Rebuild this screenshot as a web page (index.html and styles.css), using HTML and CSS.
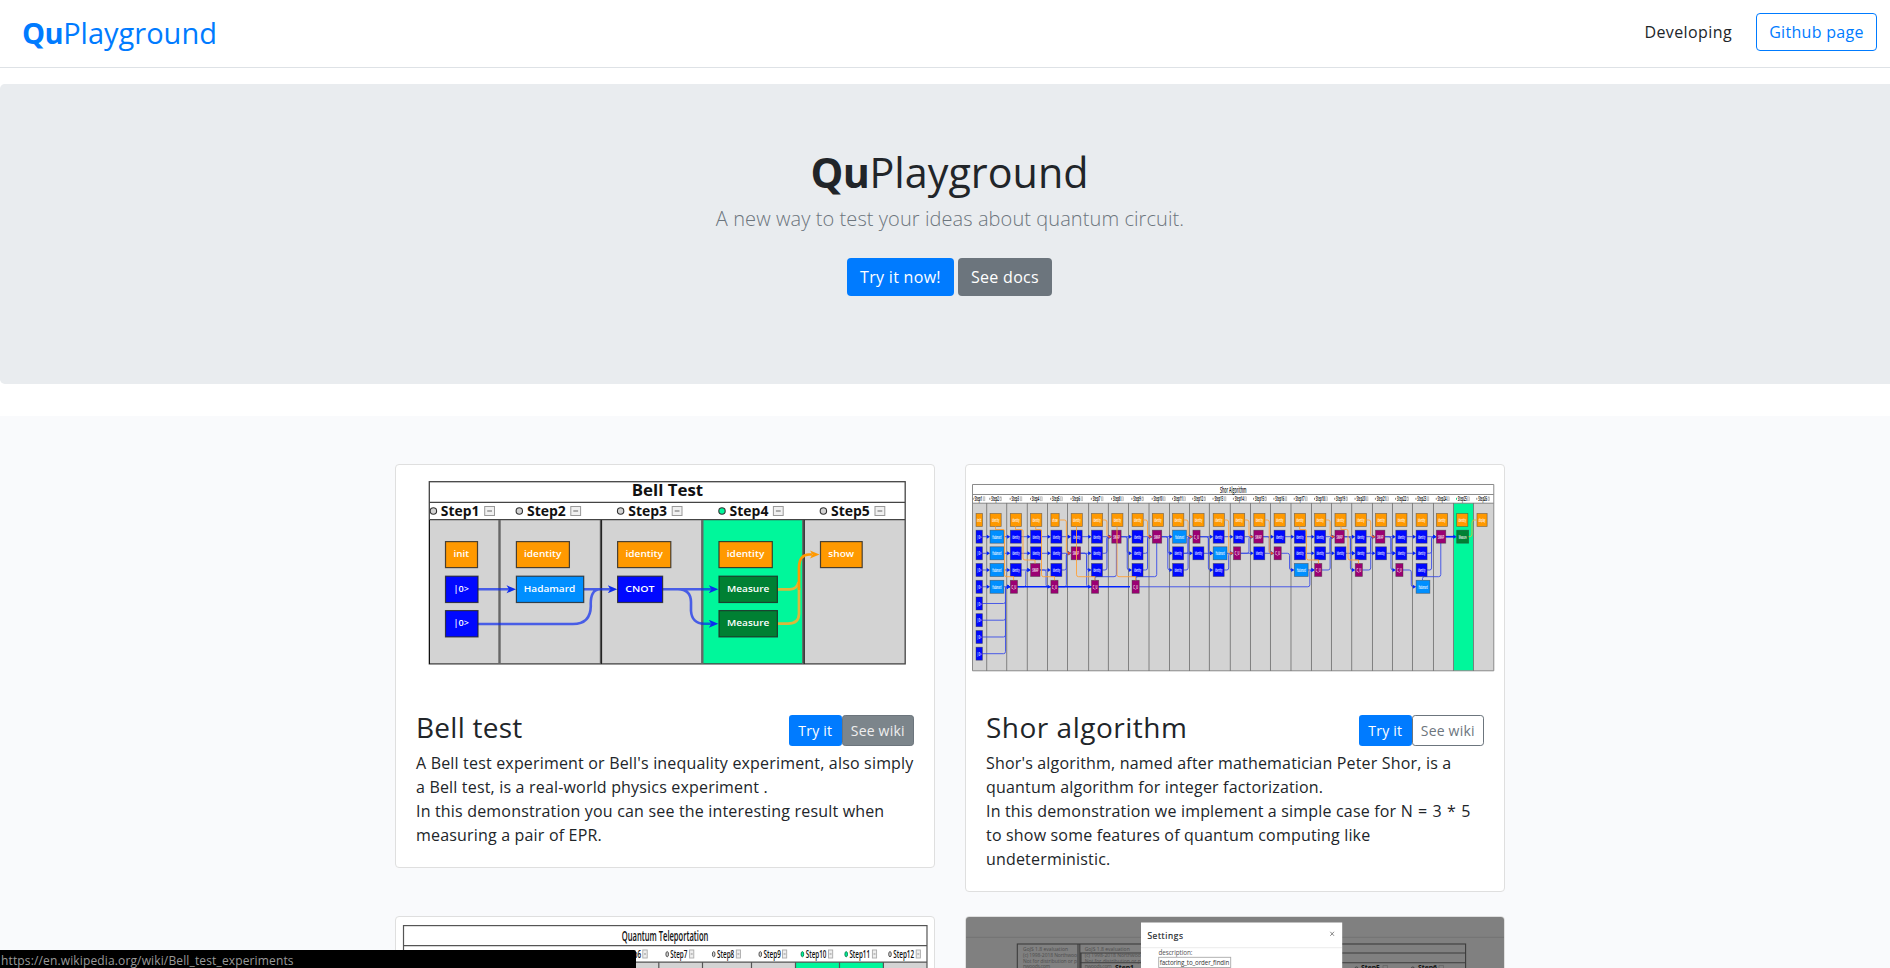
FILE: index.html
```
<!DOCTYPE html>
<html lang="en">
<head>
<meta charset="utf-8">
<title>QuPlayground</title>
<link rel="stylesheet" href="styles.css">
</head>
<body>
<header class="topbar">
  <a class="brand"><b>Qu</b>Playground</a>
  <nav class="nav">
    <a class="nav-link">Developing</a>
    <a class="btn btn-outline-primary btn-github">Github page</a>
  </nav>
</header>

<section class="hero">
  <h1 class="hero-title"><b>Qu</b>Playground</h1>
  <p class="hero-lead">A new way to test your ideas about quantum circuit.</p>
  <div class="hero-actions">
    <a class="btn btn-primary btn-try">Try it now!</a>
    <a class="btn btn-secondary btn-docs">See docs</a>
  </div>
</section>

<main class="album">
  <div class="grid">
    <article class="card">
      <svg class="card-img" viewBox="396 465 538 224.4">
        <rect x="429.3" y="481.7" width="475.9" height="182.2" fill="#fff"/>
        <rect x="429.3" y="519.7" width="475.9" height="144.2" fill="#d3d3d3"/>
        <rect x="703" y="519.7" width="100.5" height="144.2" fill="#00f79b"/>
        <g stroke="#444" stroke-width="1.3" fill="none">
          <rect x="429.3" y="481.7" width="475.9" height="182.2"/>
          <path d="M429 502.4H905M429 519.7H905"/>
        </g>
        <g stroke="#666" stroke-width="2.4"><path d="M499.5 520V664M601 520V664M702.3 520V664M803.3 520V664"/></g>
        <g stroke="#111" stroke-width="1"><path d="M429.5 520V664M601.3 520V664M804.2 520V664"/></g>
        <g class="dg-bold" font-size="15.6"><text x="631.8" y="496.5" textLength="71.4" lengthAdjust="spacingAndGlyphs">Bell Test</text></g>
        <g class="dg-bold" font-size="13.4">
          <text x="440.8" y="515.6" textLength="38.5" lengthAdjust="spacingAndGlyphs">Step1</text>
          <text x="527" y="515.6" textLength="38.8" lengthAdjust="spacingAndGlyphs">Step2</text>
          <text x="628.3" y="515.6" textLength="38.8" lengthAdjust="spacingAndGlyphs">Step3</text>
          <text x="729.6" y="515.6" textLength="38.8" lengthAdjust="spacingAndGlyphs">Step4</text>
          <text x="831" y="515.6" textLength="38.8" lengthAdjust="spacingAndGlyphs">Step5</text>
        </g>
        <g fill="#d3d3d3" stroke="#333" stroke-width="1.1">
          <circle cx="433.4" cy="511" r="3.2"/><circle cx="519.3" cy="511" r="3.2"/><circle cx="620.6" cy="511" r="3.2"/><circle cx="722" cy="511" r="3.2" fill="#00f79b"/><circle cx="823.4" cy="511" r="3.2"/>
        </g>
        <g fill="#f0f0f0" stroke="#999" stroke-width="1">
          <rect x="484.7" y="506.5" width="9.8" height="9"/><rect x="570.8" y="506.5" width="9.8" height="9"/><rect x="672.2" y="506.5" width="9.8" height="9"/><rect x="773.4" y="506.5" width="9.8" height="9"/><rect x="875" y="506.5" width="9.8" height="9"/>
          <path stroke="#666" stroke-width="1.2" d="M487.2 511h4.8M573.3 511h4.8M674.7 511h4.8M775.9 511h4.8M877.5 511h4.8"/>
        </g>
        <g fill="none" stroke="#0d2bee" stroke-opacity=".7" stroke-width="2.6">
          <path d="M478 589.3H509M584 589.3H610M478 624H573Q590.5 624 590.8 606Q590 589.5 600 589.3H610M663 589.3H711M663 589.3H678Q690.8 589.5 691 602V611Q692 623.5 704 623.7H711"/>
        </g>
        <g fill="#0d2bee"><path d="M516 589.3l-9.5-4 2.5 4-2.5 4zM617.3 589.3l-9.5-4 2.5 4-2.5 4zM718.3 589.3l-9.5-4 2.5 4-2.5 4zM718.3 623.7l-9.5-4 2.5 4-2.5 4z"/></g>
        <g fill="none" stroke-width="2.7"><path stroke="#dbb83b" d="M777.5 589.3H790Q797.5 589 798.5 582M777.5 623.7H788Q798.7 623.7 799 614V588"/><path stroke="#ff9900" d="M799 590V567Q799.5 554.7 809 554.5H812"/></g>
        <path fill="#ff9900" d="M819.5 554.5l-9.5-4 2.5 4-2.5 4z"/>
        <g stroke="#222" stroke-opacity=".8" stroke-width="1.2">
          <g fill="#ff9900"><rect x="445.5" y="541.6" width="32" height="26"/><rect x="516.4" y="541.6" width="53" height="26"/><rect x="617.6" y="541.6" width="53.2" height="26"/><rect x="719" y="541.6" width="53.3" height="26"/><rect x="820.5" y="541.6" width="41.7" height="26"/></g>
          <g fill="#0008ff"><rect x="445.5" y="576.2" width="32.5" height="26.3"/><rect x="445.5" y="610.6" width="32.5" height="26.3"/><rect x="617.6" y="576.2" width="45" height="26.3"/></g>
          <rect fill="#008fff" x="516.4" y="576.2" width="67.3" height="26.3"/>
          <g fill="#008033"><rect x="719" y="576.2" width="58.4" height="26.3"/><rect x="719" y="610.6" width="58.4" height="26.3"/></g>
        </g>
        <g class="dg-node" font-size="9.6">
          <text x="453.6" y="557.3" textLength="15.6" lengthAdjust="spacingAndGlyphs">init</text>
          <text x="524" y="557.3" textLength="37.5" lengthAdjust="spacingAndGlyphs">identity</text>
          <text x="625.5" y="557.3" textLength="37.5" lengthAdjust="spacingAndGlyphs">identity</text>
          <text x="726.8" y="557.3" textLength="37.5" lengthAdjust="spacingAndGlyphs">identity</text>
          <text x="828.3" y="557.3" textLength="25.8" lengthAdjust="spacingAndGlyphs">show</text>
          <text x="453.6" y="592" textLength="15.4" lengthAdjust="spacingAndGlyphs">|0&gt;</text>
          <text x="453.6" y="626.5" textLength="15.4" lengthAdjust="spacingAndGlyphs">|0&gt;</text>
          <text x="523.8" y="592" textLength="51.5" lengthAdjust="spacingAndGlyphs">Hadamard</text>
          <text x="625.3" y="592" textLength="29.3" lengthAdjust="spacingAndGlyphs">CNOT</text>
          <text x="727" y="592" textLength="42.3" lengthAdjust="spacingAndGlyphs">Measure</text>
          <text x="727" y="626.5" textLength="42.3" lengthAdjust="spacingAndGlyphs">Measure</text>
        </g>
      </svg>
      <div class="card-body">
        <div class="card-head">
          <h3 class="card-title title-bell">Bell test</h3>
          <div class="card-actions"><a class="btn btn-sm btn-primary">Try it</a><a class="btn btn-sm btn-wiki is-hover">See wiki</a></div>
        </div>
        <p class="card-text">A Bell test experiment or Bell's inequality experiment, also simply<br>a Bell test, is a real-world physics experiment .<br>In this demonstration you can see the interesting result when<br>measuring a pair of EPR.</p>
      </div>
    </article>

    <article class="card">
      <svg class="card-img" id="shor" viewBox="966 465 538 224.4"></svg>
      <div class="card-body">
        <div class="card-head">
          <h3 class="card-title title-shor">Shor algorithm</h3>
          <div class="card-actions"><a class="btn btn-sm btn-primary">Try it</a><a class="btn btn-sm btn-wiki">See wiki</a></div>
        </div>
        <p class="card-text">Shor's algorithm, named after mathematician Peter Shor, is a<br>quantum algorithm for integer factorization.<br>In this demonstration we implement a simple case for <span class="formula">N = 3 * 5</span><br>to show some features of quantum computing like<br>undeterministic.</p>
      </div>
    </article>

    <article class="card">
      <svg class="card-img" viewBox="396 917 538 224.4">
        <rect x="403.5" y="962" width="523.5" height="160" fill="#d3d3d3"/>
        <rect x="795.7" y="962" width="87.8" height="160" fill="#00f79b"/>
        <g stroke="#555" stroke-width="1.2" fill="none">
          <rect x="403.5" y="925.6" width="523.5" height="196"/>
          <path d="M403.5 945.6H927M403.5 962.2H927M658.8 962V1120M702.5 962V1120M751.5 962V1120M795.5 962V1120M839.5 962V1120M883.4 962V1120"/>
        </g>
        <text class="dg-bold dg-semi" font-size="13.5" x="621.8" y="940.6" textLength="86.6" lengthAdjust="spacingAndGlyphs">Quantum Teleportation</text>
        <g class="dg-bold dg-semi" font-size="11.5">
          <text x="409" y="957.9" textLength="17" lengthAdjust="spacingAndGlyphs">Step1</text>
          <text x="446" y="957.9" textLength="17" lengthAdjust="spacingAndGlyphs">Step2</text>
          <text x="490" y="957.9" textLength="17" lengthAdjust="spacingAndGlyphs">Step3</text>
          <text x="534" y="957.9" textLength="17" lengthAdjust="spacingAndGlyphs">Step4</text>
          <text x="578" y="957.9" textLength="17" lengthAdjust="spacingAndGlyphs">Step5</text>
          <text x="624" y="957.9" textLength="17" lengthAdjust="spacingAndGlyphs">Step6</text>
          <text x="670.3" y="957.9" textLength="17" lengthAdjust="spacingAndGlyphs">Step7</text>
          <text x="717" y="957.9" textLength="17.2" lengthAdjust="spacingAndGlyphs">Step8</text>
          <text x="763.5" y="957.9" textLength="17.4" lengthAdjust="spacingAndGlyphs">Step9</text>
          <text x="805.8" y="957.9" textLength="20.6" lengthAdjust="spacingAndGlyphs">Step10</text>
          <text x="849.4" y="957.9" textLength="20.6" lengthAdjust="spacingAndGlyphs">Step11</text>
          <text x="893.3" y="957.9" textLength="20.8" lengthAdjust="spacingAndGlyphs">Step12</text>
        </g>
        <g fill="#d3d3d3" stroke="#444" stroke-width=".9">
          <ellipse cx="667.2" cy="954.2" rx="1.3" ry="2.6"/><ellipse cx="713.7" cy="954.2" rx="1.3" ry="2.6"/><ellipse cx="760.3" cy="954.2" rx="1.3" ry="2.6"/><ellipse cx="890" cy="954.2" rx="1.3" ry="2.6"/>
          <g fill="#00f79b" stroke="#0a7c4c"><ellipse cx="802.4" cy="954.2" rx="1.3" ry="2.6"/><ellipse cx="846.2" cy="954.2" rx="1.3" ry="2.6"/></g>
        </g>
        <g fill="#eee" stroke="#aaa" stroke-width=".9">
          <rect x="642.8" y="950" width="4.4" height="8"/><rect x="689.6" y="950" width="4.2" height="8"/><rect x="736.3" y="950" width="4.2" height="8"/><rect x="782.5" y="950" width="4.2" height="8"/><rect x="828.5" y="950" width="4.2" height="8"/><rect x="872.4" y="950" width="4.2" height="8"/><rect x="916.2" y="950" width="4.2" height="8"/>
          <path stroke="#888" d="M644 954h2M690.7 954h2M737.4 954h2M783.6 954h2M829.6 954h2M873.5 954h2M917.3 954h2"/>
        </g>
      </svg>
    </article>

    <article class="card card-dark">
      <svg class="card-img" viewBox="966 917 538 224.4">
        <rect x="966" y="917" width="538" height="225" fill="#808080"/>
        <path d="M966 937.3H1504" stroke="#727272"/>
        <g fill="none" stroke="#3c3c3c" stroke-width="1.1">
          <rect x="1017.3" y="944" width="448.3" height="180"/>
          <path d="M1078 944V1120M1079.8 944V1120M1080 953H1465.5M1080 962.7H1465.5M1081 953V1120"/>
        </g>
        <g class="dg-mark" font-size="5">
          <text x="1023" y="951.4" textLength="45">GoJS 1.8 evaluation</text>
          <text x="1023" y="957.2" textLength="54">(c) 1998-2018 Northwoo</text>
          <text x="1023" y="963" textLength="54">Not for distribution or p</text>
          <text x="1023" y="968.4" textLength="27">nwoods.com</text>
          <text x="1084.7" y="951.4" textLength="45">GoJS 1.8 evaluation</text>
          <text x="1084.7" y="957.2" textLength="56">(c) 1998-2018 Northwoo</text>
          <text x="1084.7" y="963" textLength="56">Not for distribution or p</text>
          <text x="1084.7" y="968.4" textLength="27">nwoods.com</text>
        </g>
        <g class="dg-bold" font-size="6.8">
          <text x="1115" y="970" textLength="19">Step1</text>
          <text x="1361" y="970" textLength="19">Step5</text>
          <text x="1418" y="970" textLength="19">Step6</text>
        </g>
        <g fill="none" stroke="#333" stroke-width=".8"><circle cx="1356.5" cy="968.5" r="1.5"/><circle cx="1412.8" cy="968.5" r="1.5"/><path stroke="#666" d="M1383 970v-4.5h4.5v4.5M1439 970v-4.5h4.5v4.5"/></g>
        <rect x="1141" y="922.5" width="201.2" height="200" fill="#fff"/>
        <path d="M1141 947.7H1342" stroke="#ececec"/>
        <text class="dg-ui" font-size="8.4" x="1147.4" y="938.8" fill="#212529" stroke="#212529" stroke-width=".2" textLength="35.5">Settings</text>
        <path d="M1330.3 931.8l3.7 4M1334 931.8l-3.7 4" stroke="#777" stroke-width=".9"/>
        <text class="dg-ui" font-size="6.4" x="1158.4" y="955.2" fill="#555" textLength="34">description:</text>
        <rect x="1158.7" y="957.3" width="72" height="10.200" fill="#fff" stroke="#aaa" stroke-width=".9"/>
        <text class="dg-ui" font-size="6.2" x="1159.7" y="965.3" fill="#333" textLength="69.5">factoring_to_order_findin</text>
      </svg>
    </article>
  </div>
</main>

<div class="statusbar">https://en.wikipedia.org/wiki/Bell_test_experiments</div>
<script src="shor.js"></script>
</body>
</html>
```
FILE: styles.css
```
* { box-sizing: border-box; }
html { overflow: hidden; height: 968px; }
body {
  margin: 0;
  width: 1900px;
  height: 968px;
  overflow: hidden;
  background: #fff;
  color: #212529;
  font: 400 16px/24px "Open Sans", "Noto Sans", sans-serif;
  letter-spacing: .18px;
}
h1, h3, p { margin: 0; font-weight: 400; }

.topbar {
  display: flex;
  justify-content: space-between;
  align-items: flex-start;
  height: 68px;
  padding: 13px 23px 0 22px;
  margin-bottom: 16px;
  border-bottom: 1px solid #dee2e6;
}
.brand { font-size: 29px; line-height: 40px; letter-spacing: 0; color: #007bff; }
.brand b, .hero-title b { letter-spacing: -.5px; }
.nav { display: flex; align-items: center; gap: 24px; }
.nav-link { letter-spacing: .4px; }

.btn {
  display: inline-flex;
  align-items: center;
  justify-content: center;
  height: 38px;
  border: 1px solid transparent;
  border-radius: 4px;
  letter-spacing: .3px;
  white-space: nowrap;
}
.btn-outline-primary { color: #007bff; border-color: #007bff; }
.btn-primary { color: #fff; background: #007bff; }
.btn-secondary { color: #fff; background: #6c757d; }
.btn-github { width: 121px; }
.btn-try { width: 107px; }
.btn-docs { width: 94px; }
.btn-sm { height: 31px; width: 52.5px; font-size: 14px; line-height: 21px; border-radius: 3.2px; letter-spacing: .2px; }
.btn-wiki { width: 72.5px; color: #6c757d; border-color: #6c757d; }
.btn-wiki.is-hover { color: #efefef; background: #7c858b; }

.hero {
  height: 300px;
  margin-bottom: 32px;
  padding-top: 64px;
  border-radius: 4.8px;
  background: #e9ecef;
  text-align: center;
}
.hero-title { font-size: 41.3px; line-height: 48px; letter-spacing: 0; padding-right: 1px; margin-bottom: 8px; }
.hero-lead { font-size: 20px; line-height: 30px; font-weight: 300; letter-spacing: .08px; color: #6c757d; margin-bottom: 24px; }
.hero-actions { display: flex; justify-content: center; gap: 4px; padding-right: 1px; }

.album { background: #f9fafc; padding: 48px 0 0; height: 552px; overflow: hidden; }
.grid {
  display: grid;
  grid-template-columns: 540px 540px;
  justify-content: center;
  align-items: start;
  gap: 24px 30px;
}
.card { background: #fff; border: 1px solid #dfdfdf; border-radius: 4px; overflow: hidden; }
.card-img { display: block; width: 538px; height: 224.4px; }
.card-body { padding: 20px; }
.card-head { display: flex; justify-content: space-between; align-items: flex-start; height: 41.6px; }
.card-title { font-size: 28px; line-height: 33.6px; padding-top: 1.5px; }
.title-bell { letter-spacing: .25px; }
.title-shor { letter-spacing: .5px; }
.card-actions { display: flex; padding-top: 5.6px; }
.card-text { white-space: nowrap; }
.formula { letter-spacing: .6px; }

.dg-bold { font-family: "Open Sans", sans-serif; font-weight: 700; letter-spacing: 0; fill: #111; }
.dg-semi { font-weight: 600; }
.dg-node { font-family: "Open Sans", sans-serif; font-weight: 600; letter-spacing: 0; fill: #fff; }
.dg-tiny { font-family: "Open Sans", sans-serif; letter-spacing: 0; }
.dg-mark { font-family: "Open Sans", sans-serif; letter-spacing: 0; fill: #4c4c4c; }
.dg-ui { font-family: "Open Sans", sans-serif; letter-spacing: 0; }

.statusbar {
  position: fixed;
  left: 0;
  bottom: 0;
  width: 636px;
  height: 18px;
  padding-left: 1px;
  overflow: hidden;
  background: #000;
  border-top-right-radius: 2px;
  color: #9a9a9a;
  font-size: 12px;
  line-height: 22px;
  letter-spacing: .14px;
}
```
FILE: shor.js
```
// Draws the Shor algorithm circuit: 26 step columns, nodes per row, and links.
(function () {
  var edges = [972.5, 986.7, 1006.7, 1027.3, 1047.5, 1067.5, 1088.6, 1108.4, 1128.5, 1149, 1169.5, 1189.5, 1209.4, 1230.3,
    1250.5, 1270.5, 1291, 1311.5, 1331.5, 1351.7, 1372.5, 1392.5, 1412.5, 1433.5, 1453.5, 1473.5, 1493.8];
  var rows = [520, 536.7, 553.3, 570, 586.8, 603.5, 620.2, 637, 653.7];
  var kinds = {
    n: ['init', 6.5, '#ff9900'], o: ['identity', 11.2, '#ff9900'], s: ['show', 8.3, '#ff9900'], d: ['display', 10.2, '#ff9900'],
    z: ['|0>', 6.4, '#0008ff'], i: ['identity', 11, '#0008ff'], H: ['Hadamard', 13.8, '#008fff'],
    S: ['SWAP', 9.4, '#9b0073'], C: ['C_U', 7.2, '#9b0073'], M: ['Measure', 12, '#008033']
  };
  var cols = ['nzzzzzzzz', 'oHHHH', 'oiiiC', 'oiiS', 'siiiC', 'oiS', 'oiiiC', 'oS', 'oiiiC', 'oS', 'oHii', 'oCi', 'oiHi',
    'oiC', 'oSi', 'oiC', 'oiiH', 'oiiC', 'oSi', 'oiiC', 'oSi', 'oiiC', 'oiiiH', 'oS', 'oM', 'd'];
  function left(c) { return c === 1 ? 976 : 990 + (c - 2) * 20.29; }
  function width(c, r) { return kinds[cols[c - 1][r]][1]; }
  var out = '';
  function rect(x, y, w, h, f, extra) { out += '<rect x="' + x + '" y="' + y + '" width="' + w + '" height="' + h + '" fill="' + f + '" ' + (extra || '') + '/>'; }
  function text(t, x, y, w, size, fill, weight) {
    out += '<text class="dg-tiny" x="' + x + '" y="' + y + '" font-size="' + size + '" font-weight="' + weight + '" fill="' + fill + '" textLength="' + w + '" lengthAdjust="spacingAndGlyphs">' + t.replace('>', '&gt;') + '</text>';
  }
  function path(d, stroke, w) { out += '<path d="' + d + '" fill="none" stroke="' + stroke + '" stroke-width="' + (w || 0.9) + '" stroke-linejoin="round"/>'; }
  function head(x, y, fill) { out += '<path d="M' + x + ' ' + y + 'l-3.2-2v4z" fill="' + fill + '"/>'; }

  rect(972.5, 484.5, 521.3, 186.3, '#fff');
  rect(972.5, 503, 521.3, 167.8, '#d3d3d3');
  rect(1453.5, 503, 20, 167.8, '#00f79b');
  path('M972.5 484.5H1493.8V670.8H972.5ZM972.5 494.5H1493.8M972.5 503.2H1493.8', '#8a8a8a', 1);
  edges.slice(1, 26).forEach(function (x) { path('M' + x + ' 503V671', '#777', 0.9); });
  text('Shor Algorithm', 1220, 492.6, 26.6, 8, '#111', 600);
  for (var k = 1; k <= 26; k++) {
    var tx = k === 1 ? 974.5 : left(k) + 1.2;
    text('Step' + k, tx, 501, k < 10 ? 7.6 : 9, 6.4, '#222', 700);
    rect(tx - 1.8, 497.8, 0.9, 2, k === 25 ? '#00c77b' : '#777');
    rect(tx + (k < 10 ? 8.6 : 9.8), 496.8, 1.8, 4, '#ddd', 'stroke="#aaa" stroke-width=".5"');
  }

  var blue = '#3a4ce8', orange = '#ffa037';
  function link(c, r, d, q, color, w) {
    var x1 = left(c) + width(c, r), y1 = rows[r], x2 = left(d), y2 = rows[q], s = y2 > y1 ? 2 : -2;
    if (r === q) { path('M' + x1 + ' ' + y1 + 'H' + (x2 - 2), color, w); }
    else {
      var m = x2 - 4.8;
      path('M' + x1 + ' ' + y1 + 'H' + (m - 2) + 'q2 0 2 ' + s + 'V' + (y2 - s) + 'q0 ' + s + ' 2 ' + s + 'H' + (x2 - 1), color, w);
    }
    head(x2, y2, color === orange ? '#e8552a' : '#0022ff');
  }
  for (var c = 1; c < 25; c++) link(c, 1, c + 1, 1, blue);
  [[1, 2], [2, 2], [3, 2], [4, 2], [5, 2], [6, 2], [11, 2], [12, 2], [13, 2], [14, 2], [15, 2], [17, 2], [18, 2], [19, 2], [20, 2], [21, 2], [22, 2],
    [1, 3], [2, 3], [3, 3], [4, 3], [17, 3], [1, 4], [2, 4]].forEach(function (p) { link(p[0], p[1], p[0] + 1, p[1], blue); });
  [[3, 4, 4, 3], [4, 3, 5, 4], [5, 3, 6, 2], [5, 4, 6, 2], [6, 2, 7, 3], [6, 2, 7, 4], [7, 2, 8, 1], [7, 3, 8, 1], [8, 1, 9, 2], [8, 1, 9, 3],
    [9, 2, 10, 1], [9, 3, 10, 1], [10, 1, 11, 2], [10, 1, 11, 3], [11, 2, 12, 1], [11, 3, 12, 1], [12, 1, 13, 3], [12, 1, 13, 2], [13, 3, 14, 2],
    [14, 2, 15, 1], [15, 1, 16, 2], [16, 2, 17, 3], [18, 2, 19, 1], [18, 3, 19, 1], [19, 1, 20, 3], [19, 1, 20, 2], [20, 2, 21, 1], [20, 3, 21, 1],
    [21, 1, 22, 2], [21, 1, 22, 3], [22, 3, 23, 4], [23, 2, 24, 1], [23, 3, 24, 1],
    [1, 5, 3, 4], [1, 6, 3, 4], [1, 7, 3, 4], [1, 8, 3, 4], [9, 4, 18, 3]].forEach(function (p) { link(p[0], p[1], p[2], p[3], blue); });
  path('M1017 586.8H1130', '#0022ff', 1.6);
  path('M1445 536.7H1455', '#0022ff', 1.6);
  path('M1095 580V578.5Q1095 576.7 1097 576.7H1114Q1116.4 576.7 1116.4 574.5V543', blue);
  path('M1136 580V578.5Q1136 576.7 1138 576.7H1154.5Q1156.7 576.7 1156.7 574.5V543', blue);
  path('M1422.5 580V578.5Q1422.5 576.7 1424.5 576.7H1438.5Q1440.8 576.7 1440.8 574.5V543', blue);

  function node(c, r) {
    var n = kinds[cols[c - 1][r]], x = left(c), y = rows[r];
    rect(x, y - 6.5, n[1], 13, n[2], 'stroke="#333" stroke-opacity=".55" stroke-width=".7"');
    text(n[0], x + n[1] * 0.17, y + 2.2, n[1] * 0.66, 6, '#fff', 600);
  }
  cols.forEach(function (s, i) { for (var r = 0; r < s.length; r++) node(i + 1, r); });

  [[5, 6, 2], [7, 8, 1], [9, 10, 1], [11, 12, 1], [13, 14, 2], [14, 15, 1], [15, 16, 2], [18, 19, 1], [20, 21, 1]].forEach(function (p) { link(p[0], 0, p[1], p[2], orange); });
  [[995.5, 1004.5, 576.7, 1013.6], [1015.5, 1023, 560, 1035], [1035.7, 1041.5, 576.7, 1054.5],
    [1076.5, 1076.5, 576.7, 1094.8], [1117, 1117, 576.7, 1135.5], [1299.7, 1306.5, 560, 1318.5], [1341, 1348, 560, 1358.5]].forEach(function (p) {
    path('M' + p[0] + ' 526.5V' + (p[0] === p[1] ? p[2] - 2 : '529.5H' + (p[1] - 1.5) + 'Q' + p[1] + ' 529.5 ' + p[1] + ' 531V' + (p[2] - 2)) +
      'Q' + p[1] + ' ' + p[2] + ' ' + (p[1] + 2) + ' ' + p[2] + 'H' + p[3] + 'v3.5', orange);
  });
  path('M1468.7 536.7H1470Q1472 536.7 1472 534V523Q1472 520 1474 520H1476.5', '#dbb83b');
  document.getElementById('shor').innerHTML = out;
})();
```
